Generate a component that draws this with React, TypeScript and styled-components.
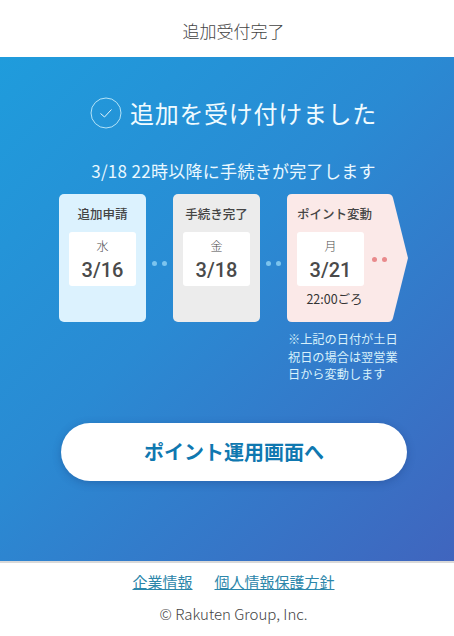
import React from "react";
import styled, { createGlobalStyle } from "styled-components";

const GlobalStyle = createGlobalStyle`
  html, body {
    margin: 0;
    padding: 0;
    background: #ffffff;
  }
  body {
    font-family: "Noto Sans CJK JP", "Noto Sans", sans-serif;
  }
`;

const Page = styled.div`
  width: 454px;
  height: 636px;
  overflow: hidden;
  display: flex;
  flex-direction: column;
`;

const Header = styled.header`
  height: 57px;
  flex: none;
  display: flex;
  align-items: center;
  justify-content: center;
  box-sizing: border-box;
  padding: 3px 0 0 13px;
  background: #ffffff;
  color: #444444;
  font-size: 17px;
  font-weight: 300;
`;

const Main = styled.main`
  height: 504px;
  flex: none;
  box-sizing: border-box;
  padding-top: 39px;
  display: flex;
  flex-direction: column;
  background: linear-gradient(135deg, #1f9cdc 0%, #2a8ad3 45%, #4065be 100%);
`;

const Title = styled.div`
  display: flex;
  align-items: center;
  justify-content: center;
  gap: 8px;
  padding-left: 13px;
  height: 34px;
`;

const TitleText = styled.h1`
  margin: 0;
  color: #f0fbff;
  font-size: 24px;
  font-weight: 400;
  letter-spacing: 0.7px;
  line-height: 34px;
`;

const Lead = styled.p`
  margin: 29px 0 0;
  padding-left: 13px;
  height: 24px;
  line-height: 24px;
  text-align: center;
  color: #eaf8ff;
  font-size: 17px;
  letter-spacing: 0.3px;
`;

const Timeline = styled.div`
  margin: 11px 0 0 59px;
  display: flex;
  align-items: flex-start;
`;

const Step = styled.div<{ $bg: string }>`
  width: 87px;
  height: 128px;
  flex: none;
  box-sizing: border-box;
  padding: 11px 10px 0;
  border-radius: 5px;
  background: ${(p) => p.$bg};
`;

const StepLabel = styled.div`
  height: 17px;
  line-height: 17px;
  text-align: center;
  white-space: nowrap;
  color: #444444;
  font-size: 12.5px;
  font-weight: 500;
`;

const DateBox = styled.div`
  width: 67px;
  height: 54px;
  margin-top: 10px;
  flex: none;
  box-sizing: border-box;
  padding-top: 6px;
  border-radius: 3px;
  background: #ffffff;
  display: flex;
  flex-direction: column;
  align-items: center;
  color: #4a4a4a;
`;

const Weekday = styled.span`
  font-size: 12px;
  line-height: 16px;
  font-weight: 300;
`;

const DateText = styled.span`
  margin-top: 4px;
  font-family: Roboto, "Noto Sans", sans-serif;
  font-size: 20px;
  line-height: 24px;
  font-weight: 500;
`;

const Dots = styled.div<{ $color: string }>`
  display: flex;
  gap: 5px;
  flex: none;
  & > i {
    display: block;
    width: 5px;
    height: 5px;
    border-radius: 50%;
    background: ${(p) => p.$color};
  }
`;

const Connector = styled.div`
  width: 27px;
  height: 128px;
  flex: none;
  display: flex;
  align-items: center;
  justify-content: center;
  padding-top: 10px;
  box-sizing: border-box;
`;

const LastColumn = styled.div`
  display: flex;
  flex-direction: column;
  width: 122px;
`;

const ArrowStep = styled.div`
  width: 122px;
  height: 128px;
  box-sizing: border-box;
  padding: 11px 10px 0;
  background: #fbe9e8;
  clip-path: path("M5 0 H101 Q105 0 106 4 L121 64 L106 124 Q105 128 101 128 H5 Q0 128 0 123 V5 Q0 0 5 0 Z");
`;

const ArrowLabel = styled(StepLabel)`
  text-align: left;
`;

const ArrowRow = styled.div`
  display: flex;
  align-items: center;
  gap: 8px;
`;

const ArrowDots = styled(Dots)`
  margin-top: 10px;
`;

const Time = styled.div`
  width: 67px;
  margin-top: 5px;
  padding-left: 4px;
  text-align: center;
  white-space: nowrap;
  color: #333333;
  font-size: 12.5px;
  line-height: 16px;
`;

const Note = styled.p`
  margin: 9px 0 0 1px;
  width: 112px;
  color: #d8f1fb;
  font-size: 12.2px;
  line-height: 17.5px;
`;

const PrimaryButton = styled.button`
  display: block;
  width: 346px;
  height: 58px;
  margin: 39px 0 0 61px;
  padding: 0;
  border: none;
  border-radius: 29px;
  background: #ffffff;
  box-shadow: 0 2px 8px rgba(20, 50, 110, 0.3);
  color: #0f78b0;
  font-family: inherit;
  font-size: 20px;
  font-weight: 700;
`;

const Footer = styled.footer`
  flex: 1;
  border-top: 2px solid #d9d9d9;
  background: #ffffff;
  padding-left: 13px;
  display: flex;
  flex-direction: column;
  align-items: center;
`;

const FooterLinks = styled.nav`
  display: flex;
  gap: 22px;
  margin-top: 8px;
`;

const FooterLink = styled.a`
  color: #2c86aa;
  font-size: 15px;
  line-height: 22px;
  text-decoration: underline;
`;

const Copyright = styled.div`
  margin-top: 10px;
  color: #444444;
  font-size: 15px;
  font-weight: 300;
  line-height: 22px;
`;

const CheckIcon = () => (
  <svg width="32" height="32" viewBox="0 0 32 32" fill="none" aria-hidden="true">
    <circle cx="16" cy="16" r="15" stroke="#c5ecfa" strokeWidth="0.9" />
    <path d="M10.5 16.5 L14.5 20 L21.5 12.5" stroke="#e6f7fd" strokeWidth="1" />
  </svg>
);

const steps = [
  { label: "追加申請", weekday: "水", date: "3/16", bg: "#dcf2fe" },
  { label: "手続き完了", weekday: "金", date: "3/18", bg: "#ececec" },
];

export default function App() {
  return (
    <Page>
      <GlobalStyle />
      <Header>追加受付完了</Header>
      <Main>
        <Title>
          <CheckIcon />
          <TitleText>追加を受け付けました</TitleText>
        </Title>
        <Lead>3/18 22時以降に手続きが完了します</Lead>
        <Timeline>
          {steps.map((s) => (
            <React.Fragment key={s.date}>
              <Step $bg={s.bg}>
                <StepLabel>{s.label}</StepLabel>
                <DateBox>
                  <Weekday>{s.weekday}</Weekday>
                  <DateText>{s.date}</DateText>
                </DateBox>
              </Step>
              <Connector>
                <Dots $color="#7cc4ee">
                  <i />
                  <i />
                </Dots>
              </Connector>
            </React.Fragment>
          ))}
          <LastColumn>
            <ArrowStep>
              <ArrowLabel>ポイント変動</ArrowLabel>
              <ArrowRow>
                <DateBox>
                  <Weekday>月</Weekday>
                  <DateText>3/21</DateText>
                </DateBox>
                <ArrowDots $color="#e98a8c">
                  <i />
                  <i />
                </ArrowDots>
              </ArrowRow>
              <Time>22:00ごろ</Time>
            </ArrowStep>
            <Note>※上記の日付が土日祝日の場合は翌営業日から変動します</Note>
          </LastColumn>
        </Timeline>
        <PrimaryButton>ポイント運用画面へ</PrimaryButton>
      </Main>
      <Footer>
        <FooterLinks>
          <FooterLink>企業情報</FooterLink>
          <FooterLink>個人情報保護方針</FooterLink>
        </FooterLinks>
        <Copyright>© Rakuten Group, Inc.</Copyright>
      </Footer>
    </Page>
  );
}
